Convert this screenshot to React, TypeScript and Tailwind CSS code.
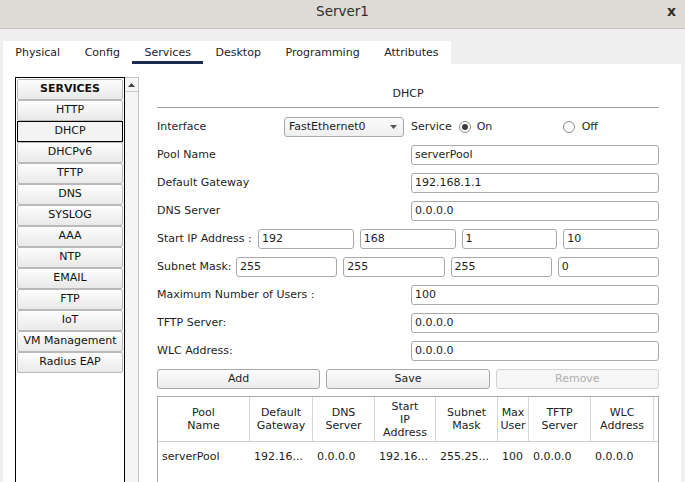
import React from "react";

const Field = ({ value, className }: { value: string; className: string }) => (
  <div
    className={`h-[20px] border border-[#a9a9a9] rounded-[3px] bg-white flex items-center pl-[3px] whitespace-nowrap overflow-hidden ${className}`}
  >
    {value}
  </div>
);

const Radio = ({ on }: { on: boolean }) => (
  <span className="w-[12px] h-[12px] rounded-full border border-[#8c8c8c] bg-white flex items-center justify-center shrink-0">
    {on && <span className="w-[6px] h-[6px] rounded-full bg-[#3c3c3c]" />}
  </span>
);

const services = [
  "HTTP",
  "DHCP",
  "DHCPv6",
  "TFTP",
  "DNS",
  "SYSLOG",
  "AAA",
  "NTP",
  "EMAIL",
  "FTP",
  "IoT",
  "VM Management",
  "Radius EAP",
];

const tabs = ["Physical", "Config", "Services", "Desktop", "Programming", "Attributes"];

const headers: { lines: string[]; w: string }[] = [
  { lines: ["Pool", "Name"], w: "w-[92px]" },
  { lines: ["Default", "Gateway"], w: "w-[63px]" },
  { lines: ["DNS", "Server"], w: "w-[62px]" },
  { lines: ["Start", "IP", "Address"], w: "w-[61px]" },
  { lines: ["Subnet", "Mask"], w: "w-[62px]" },
  { lines: ["Max", "User"], w: "w-[31px]" },
  { lines: ["TFTP", "Server"], w: "w-[62px]" },
  { lines: ["WLC", "Address"], w: "w-[63px]" },
];

const rowData = ["serverPool", "192.16...", "0.0.0.0", "192.16...", "255.25...", "100", "0.0.0.0", "0.0.0.0"];

export default function App() {
  return (
    <div className="w-[685px] h-[482px] overflow-hidden bg-[#efefef] flex flex-col font-['DejaVu_Sans',sans-serif] text-[11px] text-[#1e1e1e]">
      {/* Title bar */}
      <div className="h-[29px] shrink-0 bg-[#dedbd7] border-b border-[#c4c1bc] relative flex items-center justify-center">
        <span className="text-[13.5px] text-[#2e2e2e] -mt-[6px]">Server1</span>
        <span className="absolute right-[9px] top-[1px] text-[14px] font-bold text-[#2e2e2e]">x</span>
      </div>

      {/* Tabs */}
      <div className="mt-[12px] ml-[3px] flex">
        <div className="flex bg-white h-[23px]">
          {tabs.map((t) => (
            <div key={t} className="relative px-[12.3px] h-[23px] flex items-center text-[#222]">
              <span className="mt-[1px]">{t}</span>
              {t === "Services" && (
                <span className="absolute left-0 right-0 bottom-0 h-[3px] bg-[#1c2d4d]" />
              )}
            </div>
          ))}
        </div>
      </div>

      {/* Panel */}
      <div className="ml-[3px] w-[678px] flex-1 bg-white flex">
        {/* Sidebar */}
        <div className="ml-[12px] mt-[13px] flex h-[440px] shrink-0">
          <div className="w-[110px] border border-black p-px flex flex-col">
            <div className="h-[21px] shrink-0 border border-[#b9b9b9] rounded-[2px] bg-linear-to-b from-[#fdfdfd] to-[#e9e9e9] flex items-center justify-center font-bold text-[#111]">
              SERVICES
            </div>
            {services.map((s) =>
              s === "DHCP" ? (
                <div
                  key={s}
                  className="h-[21px] shrink-0 border border-black bg-[#f3f3f3] flex items-center justify-center text-[#111]"
                >
                  {s}
                </div>
              ) : (
                <div
                  key={s}
                  className="h-[21px] shrink-0 border border-[#b9b9b9] rounded-[2px] bg-linear-to-b from-[#fdfdfd] to-[#e9e9e9] flex items-center justify-center text-[#111]"
                >
                  {s}
                </div>
              )
            )}
          </div>
          <div className="w-[14px] border border-l-0 border-[#c2c2c2] bg-[#f5f5f5] flex flex-col">
            <div className="h-[14px] border-b border-[#c8c8c8] flex items-center justify-center">
              <svg width="7" height="4" viewBox="0 0 7 4">
                <path d="M0 4 L3.5 0 L7 4 Z" fill="#444" />
              </svg>
            </div>
          </div>
        </div>

        {/* Right form */}
        <div className="ml-[18px] w-[502px] flex flex-col">
          <div className="mt-[20px] h-[20px] flex items-center justify-center">DHCP</div>
          <div className="mt-[3px] h-px bg-[#9e9e9e]" />

          <div className="mt-[9px] flex flex-col gap-[8px]">
            {/* Interface */}
            <div className="h-[20px] flex items-center">
              <div className="w-[127px] shrink-0">Interface</div>
              <div className="w-[120px] h-[20px] border border-[#a9a9a9] rounded-[3px] bg-linear-to-b from-[#fbfbfb] to-[#efefef] flex items-center pl-[4px] pr-[6px] justify-between">
                <span>FastEthernet0</span>
                <svg width="7" height="4" viewBox="0 0 7 4">
                  <path d="M0 0 L7 0 L3.5 4 Z" fill="#555" />
                </svg>
              </div>
              <div className="ml-[7px]">Service</div>
              <div className="ml-[7px] w-[104px] flex items-center">
                <Radio on={true} />
                <span className="ml-[6px]">On</span>
              </div>
              <Radio on={false} />
              <span className="ml-[7px]">Off</span>
            </div>

            <div className="h-[20px] flex items-center">
              <div className="w-[254px] shrink-0">Pool Name</div>
              <Field value="serverPool" className="w-[248px]" />
            </div>
            <div className="h-[20px] flex items-center">
              <div className="w-[254px] shrink-0">Default Gateway</div>
              <Field value="192.168.1.1" className="w-[248px]" />
            </div>
            <div className="h-[20px] flex items-center">
              <div className="w-[254px] shrink-0">DNS Server</div>
              <Field value="0.0.0.0" className="w-[248px]" />
            </div>

            <div className="h-[20px] flex items-center">
              <div className="w-[101px] shrink-0 whitespace-nowrap">Start IP Address :</div>
              <div className="flex-1 flex gap-[6px]">
                <Field value="192" className="flex-1" />
                <Field value="168" className="flex-1" />
                <Field value="1" className="flex-1" />
                <Field value="10" className="flex-1" />
              </div>
            </div>

            <div className="h-[20px] flex items-center">
              <div className="w-[79px] shrink-0 whitespace-nowrap">Subnet Mask:</div>
              <div className="flex-1 flex gap-[6px]">
                <Field value="255" className="flex-1" />
                <Field value="255" className="flex-1" />
                <Field value="255" className="flex-1" />
                <Field value="0" className="flex-1" />
              </div>
            </div>

            <div className="h-[20px] flex items-center">
              <div className="w-[254px] shrink-0">Maximum Number of Users :</div>
              <Field value="100" className="w-[248px]" />
            </div>
            <div className="h-[20px] flex items-center">
              <div className="w-[254px] shrink-0">TFTP Server:</div>
              <Field value="0.0.0.0" className="w-[248px]" />
            </div>
            <div className="h-[20px] flex items-center">
              <div className="w-[254px] shrink-0">WLC Address:</div>
              <Field value="0.0.0.0" className="w-[248px]" />
            </div>

            {/* Buttons */}
            <div className="h-[20px] flex gap-[6px]">
              <div className="flex-1 h-[20px] border border-[#a6a6a6] rounded-[3px] bg-linear-to-b from-[#fcfcfc] to-[#ececec] flex items-center justify-center">
                Add
              </div>
              <div className="flex-1 h-[20px] border border-[#a6a6a6] rounded-[3px] bg-linear-to-b from-[#fcfcfc] to-[#ececec] flex items-center justify-center">
                Save
              </div>
              <div className="flex-1 h-[20px] border border-[#d2d2d2] rounded-[3px] bg-[#f6f6f6] flex items-center justify-center text-[#b0b0b0]">
                Remove
              </div>
            </div>
          </div>

          {/* Table */}
          <div className="mt-[7px] h-[120px] border border-[#a9a9a9] bg-white shrink-0">
            <div className="flex h-[45px] border-b border-[#cfcfcf]">
              {headers.map((h, i) => (
                <div
                  key={i}
                  className={`${h.w} shrink-0 border-r border-[#d6d6d6] flex flex-col items-center justify-center leading-[13px] text-[#222]`}
                >
                  {h.lines.map((l) => (
                    <span key={l}>{l}</span>
                  ))}
                </div>
              ))}
            </div>
            <div className="flex h-[30px] items-center">
              {rowData.map((d, i) => (
                <div key={i} className={`${headers[i].w} shrink-0 pl-[4px] whitespace-nowrap overflow-hidden`}>
                  {d}
                </div>
              ))}
            </div>
          </div>
        </div>
      </div>
    </div>
  );
}
